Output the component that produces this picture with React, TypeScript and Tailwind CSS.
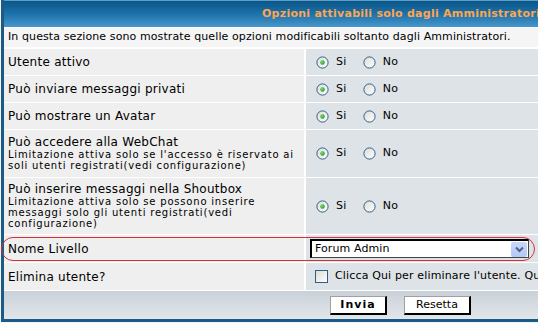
import React from "react";

const font = { fontFamily: '"DejaVu Sans", Verdana, sans-serif' };

function Radio({ checked }: { checked?: boolean }) {
  return (
    <svg width="13" height="13" viewBox="0 0 13 13" className="shrink-0">
      <defs>
        <linearGradient id="rg" x1="0" y1="0" x2="1" y2="1">
          <stop offset="0" stopColor="#dcdcd6" />
          <stop offset="1" stopColor="#ffffff" />
        </linearGradient>
        <radialGradient id="dot" cx="0.4" cy="0.4" r="0.6">
          <stop offset="0" stopColor="#7fe07f" />
          <stop offset="1" stopColor="#1f9a1f" />
        </radialGradient>
      </defs>
      <circle cx="6.5" cy="6.5" r="5.6" fill="url(#rg)" stroke="#2f5f88" strokeWidth="1" />
      {checked && <circle cx="6.5" cy="6.5" r="2.2" fill="url(#dot)" />}
    </svg>
  );
}

function YesNo() {
  return (
    <div className="flex items-center pl-[10px] text-[11px] tracking-[0.3px] text-black">
      <Radio checked />
      <span className="ml-[7px]">Si</span>
      <span className="ml-[16px] flex items-center">
        <Radio />
      </span>
      <span className="ml-[7px]">No</span>
    </div>
  );
}

function Row({
  left,
  right,
  h,
}: {
  left: React.ReactNode;
  right: React.ReactNode;
  h: string;
}) {
  return (
    <div className={`grid grid-cols-[300px_1fr] gap-x-[2px] ${h}`}>
      <div className="bg-[#efefef] pl-[4px] flex flex-col justify-center whitespace-nowrap">{left}</div>
      <div className="bg-[#dee3e7] flex items-center">{right}</div>
    </div>
  );
}

const label = "text-[12px] tracking-[0.25px]";
const desc = "text-[10px] tracking-[0.8px] leading-[11px]";

export default function App() {
  return (
    <div className="w-[538px] h-[323px] overflow-hidden bg-[#f4f4f4]" style={font}>
      <div className="w-[760px] ml-px border-l-[3px] border-b-[3px] border-[#1b5b86] bg-white flex flex-col gap-y-px">
        <div className="h-[27px] bg-gradient-to-b from-[#0b5688] via-[#1c72aa] to-[#4597cb] flex items-center pl-[258px] border-t border-[#5d9fc9]">
          <span className="text-[11px] font-bold tracking-[0.25px] text-[#ffa54f] whitespace-nowrap">
            Opzioni attivabili solo dagli Amministratori
          </span>
        </div>
        <div className="h-[19px] bg-[#f5f5f5] pl-[4px] flex items-center text-[11px] tracking-[0.1px] text-black whitespace-nowrap mb-px">
          In questa sezione sono mostrate quelle opzioni modificabili soltanto dagli Amministratori.
        </div>
        <Row h="h-[26px]" left={<span className={label}>Utente attivo</span>} right={<YesNo />} />
        <Row h="h-[26px]" left={<span className={label}>Può inviare messaggi privati</span>} right={<YesNo />} />
        <Row h="h-[26px]" left={<span className={label}>Può mostrare un Avatar</span>} right={<YesNo />} />
        <Row
          h="h-[47px]"
          left={
            <div>
              <div className={`${label} leading-[13px]`}>Può accedere alla WebChat</div>
              <div className={desc}>
                Limitazione attiva solo se l'accesso è riservato ai
                <br />
                soli utenti registrati(vedi configurazione)
              </div>
            </div>
          }
          right={<YesNo />}
        />
        <Row
          h="h-[56px]"
          left={
            <div>
              <div className={`${label} leading-[13px]`}>Può inserire messaggi nella Shoutbox</div>
              <div className={desc}>
                Limitazione attiva solo se possono inserire
                <br />
                messaggi solo gli utenti registrati(vedi
                <br />
                configurazione)
              </div>
            </div>
          }
          right={<YesNo />}
        />
        <div className="relative">
          <Row
            h="h-[27px]"
            left={<span className={label}>Nome Livello</span>}
            right={
              <div className="ml-[4px] w-[219px] h-[19px] bg-white border-l-2 border-t-2 border-black border-r border-b border-r-[#444] border-b-[#444] flex items-center justify-between">
                <span className="text-[11px] tracking-[0.1px] pl-[3px]">Forum Admin</span>
                <span className="w-[16px] h-[15px] mr-px bg-gradient-to-b from-[#c9d8fb] to-[#b2c8f6] rounded-[2px] flex items-center justify-center">
                  <svg width="9" height="7" viewBox="0 0 9 7">
                    <path d="M1 1.5 L4.5 5 L8 1.5" fill="none" stroke="#4d6185" strokeWidth="2" />
                  </svg>
                </span>
              </div>
            }
          />
          <div className="absolute left-[-3px] top-[2px] h-[24px] w-[534px] rounded-[12px] border border-[#d23232] pointer-events-none" />
        </div>
        <Row
          h="h-[27px]"
          left={<span className={label}>Elimina utente?</span>}
          right={
            <div className="flex items-center pl-[9px] text-[11px] tracking-[0.15px] whitespace-nowrap">
              <span className="w-[13px] h-[13px] border border-[#2f5f88] bg-gradient-to-br from-[#dcdcd6] to-white" />
              <span className="ml-[7px]">Clicca Qui per eliminare l'utente. Questa operazione non è reversibile</span>
            </div>
          }
        />
        <div className="h-[28px] bg-gradient-to-b from-[#c9d1d8] to-[#e2e6ea] flex items-center pl-[326px]">
          <button className="h-[19px] w-[57px] bg-white border border-[#a0a0a0] border-r-2 border-b-2 border-r-black border-b-black text-[11px] font-bold tracking-[1px] text-black leading-none">
            Invia
          </button>
          <button className="ml-[17px] h-[19px] w-[67px] bg-white border border-[#a0a0a0] border-r-2 border-b-2 border-r-black border-b-black text-[11px] text-black leading-none">
            Resetta
          </button>
        </div>
      </div>
    </div>
  );
}
